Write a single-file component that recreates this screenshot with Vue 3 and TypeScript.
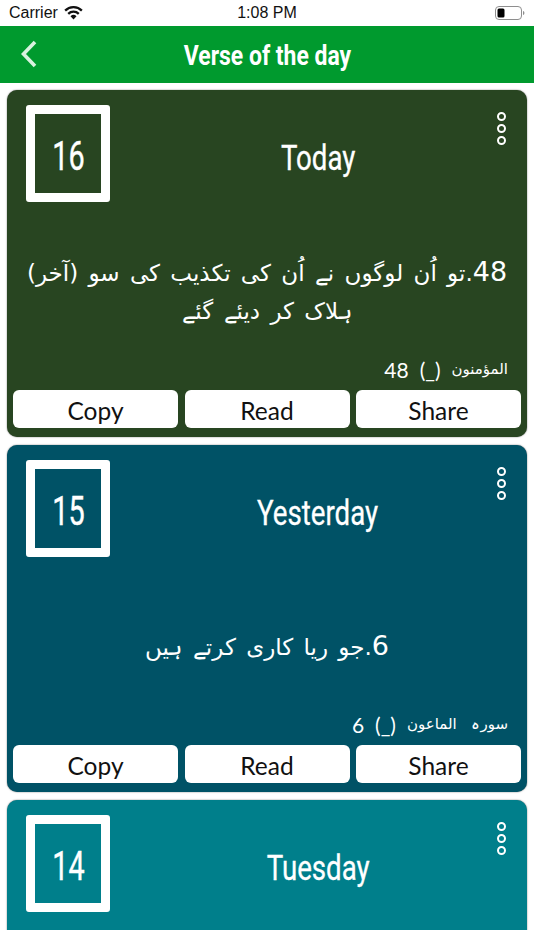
<script setup lang="ts">
interface Verse {
  day: string
  label: string
  aya: string
  text: string
  source: string
  color: string
}
const verses: Verse[] = [
  { day: '16', label: 'Today', aya: '48', text: '.تو اُن لوگوں نے اُن کی تکذیب کی سو (آخر) ہلاک کر دیئے گئے', source: 'المؤمنون', color: '#284521' },
  { day: '15', label: 'Yesterday', aya: '6', text: '.جو ریا کاری کرتے ہیں', source: 'سورہ الماعون', color: '#005266' },
  { day: '14', label: 'Tuesday', aya: '', text: '', source: '', color: '#007f8b' },
]
const actions = ['Copy', 'Read', 'Share']
</script>

<template>
  <div class="screen">
    <div class="status">
      <div class="status-left">
        <span>Carrier</span>
        <svg class="wifi" viewBox="0 0 20 15" width="19" height="14">
          <path d="M10 14.5 6.8 11a4.6 4.6 0 0 1 6.4 0Z" fill="#111" />
          <path d="M5.2 9.3 3.5 7.5a9.3 9.3 0 0 1 13 0l-1.7 1.8a6.9 6.9 0 0 0-9.6 0Z" fill="#111" />
          <path d="M1.9 5.8 0.2 4a14 14 0 0 1 19.6 0l-1.7 1.8a11.6 11.6 0 0 0-16.2 0Z" fill="#111" />
        </svg>
      </div>
      <span class="time">1:08 PM</span>
      <svg class="battery" viewBox="0 0 30 14" width="30" height="14">
        <rect x="0.5" y="0.5" width="26" height="13" rx="3.5" fill="none" stroke="#8e8e8e" />
        <rect x="2.5" y="2.5" width="7" height="9" rx="1.5" fill="#000" />
        <path d="M28 5v4c1 -0.3 1.4 -1.1 1.4 -2s-0.4 -1.7 -1.4 -2Z" fill="#8e8e8e" />
      </svg>
    </div>
    <header class="bar">
      <svg class="back" viewBox="0 0 20 30" width="20" height="30">
        <path d="M16 3 4.5 15 16 27" fill="none" stroke="#d9f2df" stroke-width="3.6" />
      </svg>
      <h1 class="bar-title"><span>Verse of the day</span></h1>
    </header>
    <main class="list">
      <article v-for="v in verses" :key="v.day" class="card" :style="{ background: v.color }">
        <div class="top">
          <div class="date"><span class="narrow">{{ v.day }}</span></div>
          <div class="label"><span class="narrow">{{ v.label }}</span></div>
          <div class="dots"><i></i><i></i><i></i></div>
        </div>
        <template v-if="v.text">
          <div class="verse">
            <p dir="rtl"><span class="num">{{ v.aya }}</span>{{ v.text }}</p>
          </div>
          <div class="source" dir="rtl">
            <span class="src-name">{{ v.source }}</span>
            <span class="num-small">(_)</span>
            <span class="num-small">{{ v.aya }}</span>
          </div>
          <div class="actions">
            <button v-for="a in actions" :key="a" class="action">{{ a }}</button>
          </div>
        </template>
      </article>
    </main>
  </div>
</template>

<style scoped>
.screen {
  width: 534px;
  height: 950px;
  background: #fff;
  overflow: hidden;
  display: flex;
  flex-direction: column;
  font-family: "Roboto", "Liberation Sans", sans-serif;
}
.status {
  height: 26px;
  flex: none;
  display: flex;
  align-items: center;
  justify-content: space-between;
  padding: 0 9px;
  position: relative;
  font-family: "Liberation Sans", sans-serif;
  font-size: 16px;
  color: #111;
}
.status-left {
  display: flex;
  align-items: center;
  gap: 6px;
}
.time {
  position: absolute;
  left: 0;
  right: 0;
  text-align: center;
}
.bar {
  height: 57px;
  flex: none;
  background: #009a2e;
  display: flex;
  align-items: center;
  justify-content: center;
  position: relative;
}
.back {
  position: absolute;
  left: 19px;
  top: 13px;
}
.bar-title {
  margin: 0;
  padding-top: 2px;
  color: #fff;
  font-size: 27px;
  font-weight: 700;
}
.bar-title span {
  display: inline-block;
  transform: scaleX(0.85);
}
.list {
  height: 847px;
  box-sizing: border-box;
  flex: none;
  overflow: hidden;
  padding: 7px 7px 0;
  display: flex;
  flex-direction: column;
  gap: 8px;
}
.card {
  flex: none;
  height: 347px;
  box-sizing: border-box;
  border-radius: 10px;
  box-shadow: 0 0 1.5px rgba(0, 0, 0, 0.65);
  padding: 15px 6px 9px;
  display: flex;
  flex-direction: column;
  color: #fff;
}
.top {
  display: flex;
  height: 97px;
  padding-left: 13px;
  position: relative;
}
.date {
  width: 84px;
  height: 97px;
  box-sizing: border-box;
  border: 9px solid #fff;
  border-radius: 3px;
  display: flex;
  align-items: center;
  justify-content: center;
  font-size: 40px;
  line-height: 86px;
  padding-top: 6px;
  -webkit-text-stroke: 0.4px #fff;
}
.narrow {
  display: inline-block;
  transform: scaleX(0.79);
}
.date .narrow {
  transform: scaleX(0.72);
}
.label {
  flex: 1;
  text-align: center;
  font-size: 35px;
  line-height: 108px;
  padding-left: 5px;
  -webkit-text-stroke: 0.3px #fff;
}
.dots {
  position: absolute;
  right: 15px;
  top: 6.5px;
  display: flex;
  flex-direction: column;
  gap: 2.5px;
}
.dots i {
  width: 9.5px;
  height: 9.5px;
  box-sizing: border-box;
  border: 2.8px solid #fff;
  border-radius: 50%;
  display: block;
}
.verse {
  height: 150px;
  padding: 28px 8px 0;
  box-sizing: border-box;
  display: flex;
  align-items: center;
  justify-content: center;
}
.verse p {
  margin: 0;
  font-family: "DejaVu Sans", sans-serif;
  font-size: 23px;
  word-spacing: 3px;
  line-height: 38px;
  text-align: center;
}
.num {
  font-size: 27px;
}
.source {
  height: 38px;
  box-sizing: border-box;
  padding: 0 13px 4px;
  display: flex;
  align-items: center;
  gap: 11px;
  font-family: "DejaVu Sans", sans-serif;
  font-size: 15px;
  word-spacing: 10px;
}
.num-small {
  font-family: "Lato", sans-serif;
  font-size: 21px;
}
.actions {
  display: grid;
  grid-template-columns: repeat(3, 1fr);
  gap: 6.5px;
  height: 38px;
  flex: none;
}
.action {
  border: none;
  border-radius: 6px;
  background: #fff;
  color: #111;
  padding: 2px 0 0;
  font-family: "Lato", sans-serif;
  font-size: 24.5px;
}
</style>
